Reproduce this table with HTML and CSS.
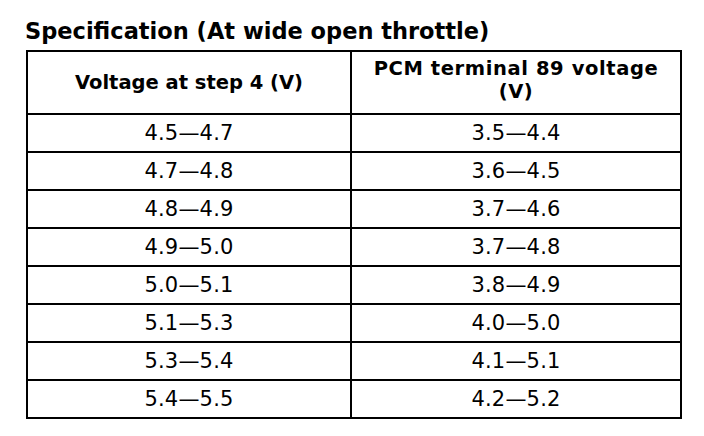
FILE: index.html
```html
<!DOCTYPE html>
<html>
<head>
<meta charset="utf-8">
<link rel="stylesheet" href="styles.css">
</head>
<body>
<div class="page">
  <h1 class="title">Specification (At wide open throttle)</h1>
  <table class="spec">
    <thead>
      <tr>
        <th class="col1">Voltage at step 4 (V)</th>
        <th class="col2">PCM terminal 89 voltage<br>(V)</th>
      </tr>
    </thead>
    <tbody>
      <tr><td>4.5—4.7</td><td>3.5—4.4</td></tr>
      <tr><td>4.7—4.8</td><td>3.6—4.5</td></tr>
      <tr><td>4.8—4.9</td><td>3.7—4.6</td></tr>
      <tr><td>4.9—5.0</td><td>3.7—4.8</td></tr>
      <tr><td>5.0—5.1</td><td>3.8—4.9</td></tr>
      <tr><td>5.1—5.3</td><td>4.0—5.0</td></tr>
      <tr><td>5.3—5.4</td><td>4.1—5.1</td></tr>
      <tr><td>5.4—5.5</td><td>4.2—5.2</td></tr>
    </tbody>
  </table>
</div>
</body>
</html>
```
FILE: styles.css
```css
html, body {
  margin: 0;
  padding: 0;
  background: #fff;
}
.page {
  width: 704px;
  height: 436px;
  padding: 17px 0 0 26px;
  box-sizing: border-box;
  font-family: "DejaVu Sans", "Liberation Sans", sans-serif;
  color: #000;
}
.title {
  margin: 0 0 0 -1px;
  font-size: 22.5px;
  font-weight: bold;
  line-height: 28px;
  height: 33px;
}
.spec {
  border-collapse: collapse;
  width: 656px;
  border: 2px solid #000;
}
.spec th, .spec td {
  border: 2px solid #000;
  text-align: center;
  padding: 0;
}
.spec th {
  font-size: 19.5px;
  font-weight: bold;
  line-height: 23px;
  height: 61px;
}
.spec .col1 {
  width: 322px;
}
.spec .col2 {
  padding-bottom: 6px;
  height: 55px;
  letter-spacing: 0.6px;
}
.spec td {
  font-size: 21px;
  height: 36px;
  line-height: 22px;
  letter-spacing: 0.2px;
}
```
